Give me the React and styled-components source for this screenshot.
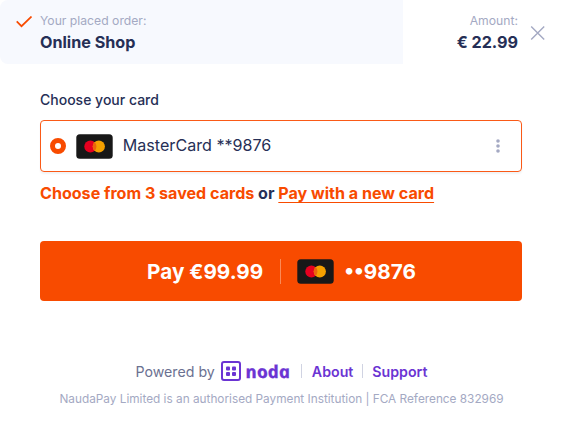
import React from "react";
import styled, { createGlobalStyle } from "styled-components";

const GlobalStyle = createGlobalStyle`
  * {
    box-sizing: border-box;
  }
  body {
    margin: 0;
    background: #fff;
    color: #262f56;
    font-family: Inter, "Liberation Sans", sans-serif;
  }
`;

const Widget = styled.main`
  width: 563px;
  height: 434px;
  overflow: hidden;
  background: #fff;
`;

const Header = styled.header`
  display: flex;
  height: 64px;
`;

const OrderPanel = styled.div`
  display: flex;
  width: 403px;
  padding: 13px 0 0 16px;
  gap: 8px;
  background: #f7f9fe;
  border-radius: 8px 0 0 8px;
`;

const AmountPanel = styled.div`
  display: flex;
  flex: 1;
  justify-content: flex-end;
  padding: 13px 17px 0 0;
  gap: 12px;
  text-align: right;
`;

const Label = styled.div`
  font-size: 12.2px;
  line-height: 16px;
  color: #a4a9c3;
`;

const Value = styled.div`
  margin-top: 3px;
  font-size: 16.15px;
  font-weight: 700;
  line-height: 20px;
`;

const CheckIcon = styled.svg`
  width: 16px;
  height: 12px;
  margin-top: 3px;
  flex: none;
`;

const CloseButton = styled.button`
  display: block;
  width: 16px;
  height: 16px;
  margin-top: 12px;
  padding: 0;
  border: 0;
  background: none;
  cursor: pointer;
  svg {
    display: block;
  }
`;

const Content = styled.section`
  padding: 26px 41px 0 40px;
`;

const SectionTitle = styled.h2`
  margin: 0;
  font-size: 14px;
  font-weight: 500;
  line-height: 20px;
`;

const CardRow = styled.div`
  display: flex;
  align-items: center;
  height: 52px;
  margin-top: 10px;
  padding: 0 19px 0 9.3px;
  border: 1.5px solid #fa5a17;
  border-radius: 4px;
  box-shadow: 0 2px 2px rgba(38, 47, 86, 0.06);
`;

const Radio = styled.span`
  width: 16px;
  height: 16px;
  margin-right: 10px;
  border: 5px solid #f84b00;
  border-radius: 50%;
`;

const CardName = styled.span`
  flex: 1;
  margin-left: 9.5px;
  padding-bottom: 2px;
  font-size: 16.1px;
  line-height: 24px;
`;

const CardLogo = styled.svg`
  display: block;
  width: 37px;
  height: 25px;
  flex: none;
`;

const MoreButton = styled.button`
  display: block;
  padding: 0;
  border: 0;
  background: none;
  cursor: pointer;
  svg {
    display: block;
  }
`;

const Choices = styled.p`
  margin: 9px 0 0;
  font-size: 16.08px;
  font-weight: 700;
  line-height: 24px;
  white-space: nowrap;
`;

const ChoiceLink = styled.a`
  color: #f84b00;
  text-decoration: ${(props) => (props.$underlined ? "underline" : "none")};
  text-decoration-thickness: 1px;
  text-decoration-skip-ink: none;
  text-underline-offset: 3px;
`;

const PayButton = styled.button`
  display: flex;
  align-items: center;
  justify-content: center;
  width: 100%;
  height: 60px;
  margin-top: 36px;
  padding: 0 0 0 1px;
  border: 0;
  border-radius: 4px;
  background: #f84b00;
  color: #fff;
  font-family: inherit;
  font-size: 20.7px;
  font-weight: 700;
  cursor: pointer;
`;

const Divider = styled.span`
  width: 1px;
  height: ${(props) => props.$height}px;
  margin: 0 ${(props) => props.$gap}px;
  background: ${(props) => props.$color};
`;

const PayDigits = styled.span`
  margin-left: 10px;
`;

const Footer = styled.footer`
  margin-top: 58px;
`;

const FooterRow = styled.div`
  display: flex;
  align-items: center;
  justify-content: center;
  height: 24px;
  font-size: 14.2px;
  color: #6b7191;
`;

const NodaIcon = styled.svg`
  width: 20px;
  height: 20px;
  margin: 0 4px 0 6px;
`;

/* italic gives the single-storey "a", the skew sets it upright again */
const NodaName = styled.span`
  width: 46px;
  font-family: "Open Sans", sans-serif;
  font-size: 17.5px;
  font-style: italic;
  font-weight: 700;
  line-height: 20px;
  color: #6b34d3;
  -webkit-text-stroke: 0.3px #6b34d3;
  transform: scaleX(1.07) skewX(12deg);
  transform-origin: left center;
`;

const FooterLink = styled.a`
  font-weight: 600;
  color: #6b34d3;
`;

const Legal = styled.p`
  margin: 8px 0 0;
  font-size: 11.8px;
  line-height: 16px;
  text-align: center;
  white-space: nowrap;
  color: #a4a9c3;
`;

const MasterCard = () => (
  <CardLogo viewBox="0 0 37 25">
    <rect x="0.3" y="0.3" width="36.4" height="24.4" rx="3.5" fill="#181818" />
    <circle cx="14.4" cy="12.5" r="6.1" fill="#e6001f" />
    <circle cx="22.8" cy="12.5" r="6.1" fill="#f5a000" />
    <path
      d="M18.6 8.1a6.1 6.1 0 0 1 0 8.8a6.1 6.1 0 0 1 0-8.8Z"
      fill="#ec650c"
    />
  </CardLogo>
);

const App = () => (
  <>
    <GlobalStyle />
    <Widget>
      <Header>
        <OrderPanel>
          <CheckIcon viewBox="0 0 16 12" fill="none">
            <path d="M.7 5.4 5.5 10.2 15.5.5" stroke="#f84b00" strokeWidth="1.7" />
          </CheckIcon>
          <div>
            <Label>Your placed order:</Label>
            <Value>Online Shop</Value>
          </div>
        </OrderPanel>
        <AmountPanel>
          <div>
            <Label>Amount:</Label>
            <Value>€ 22.99</Value>
          </div>
          <CloseButton aria-label="Close">
            <svg width="16" height="16" fill="none">
              <path
                d="m1.2 1.5 13 13m0-13-13 13"
                stroke="#a4a9c3"
                strokeWidth="1.4"
              />
            </svg>
          </CloseButton>
        </AmountPanel>
      </Header>
      <Content>
        <SectionTitle>Choose your card</SectionTitle>
        <CardRow>
          <Radio />
          <MasterCard />
          <CardName>MasterCard **9876</CardName>
          <MoreButton aria-label="Card options">
            <svg width="8" height="16" fill="#a4a9c3">
              <circle cx="4" cy="3" r="1.8" />
              <circle cx="4" cy="8" r="1.8" />
              <circle cx="4" cy="13" r="1.8" />
            </svg>
          </MoreButton>
        </CardRow>
        <Choices>
          <ChoiceLink>Choose from 3 saved cards</ChoiceLink> or{" "}
          <ChoiceLink $underlined>Pay with a new card</ChoiceLink>
        </Choices>
        <PayButton>
          <span>Pay €99.99</span>
          <Divider $height={25} $gap={16.5} $color="#fb8a57" />
          <MasterCard />
          <PayDigits>••9876</PayDigits>
        </PayButton>
      </Content>
      <Footer>
        <FooterRow>
          <span>Powered by</span>
          <NodaIcon viewBox="0 0 20 20">
            <rect
              x="1"
              y="1"
              width="18"
              height="18"
              rx="2"
              fill="none"
              stroke="#6b34d3"
              strokeWidth="2"
            />
            <g fill="#6b34d3">
              <rect x="5" y="5.5" width="4" height="4" rx="1" />
              <rect x="11" y="5.5" width="4" height="4" rx="1" />
              <rect x="5" y="11" width="4" height="4" rx="1" />
              <rect x="11" y="11" width="4" height="4" rx="1" />
            </g>
          </NodaIcon>
          <NodaName>noda</NodaName>
          <Divider $height={14} $gap={10} $color="#d0d3e2" />
          <FooterLink>About</FooterLink>
          <Divider $height={14} $gap={9} $color="#d0d3e2" />
          <FooterLink>Support</FooterLink>
        </FooterRow>
        <Legal>
          NaudaPay Limited is an authorised Payment Institution | FCA Reference
          832969
        </Legal>
      </Footer>
    </Widget>
  </>
);

export default App;
